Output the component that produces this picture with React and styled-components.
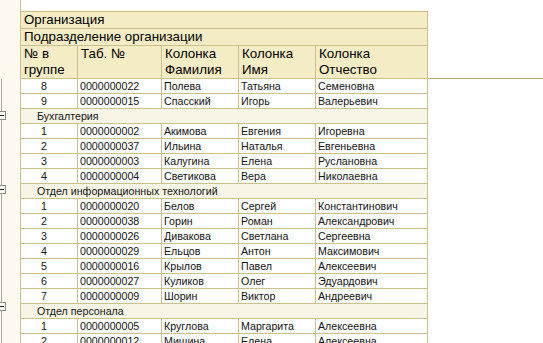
import React from 'react';
import styled, { createGlobalStyle } from 'styled-components';

const rows = [
  { n: '8', tab: '0000000022', last: 'Полева', first: 'Татьяна', middle: 'Семеновна' },
  { n: '9', tab: '0000000015', last: 'Спасский', first: 'Игорь', middle: 'Валерьевич' },
  { group: 'Бухгалтерия' },
  { n: '1', tab: '0000000002', last: 'Акимова', first: 'Евгения', middle: 'Игоревна' },
  { n: '2', tab: '0000000037', last: 'Ильина', first: 'Наталья', middle: 'Евгеньевна' },
  { n: '3', tab: '0000000003', last: 'Калугина', first: 'Елена', middle: 'Руслановна' },
  { n: '4', tab: '0000000004', last: 'Светикова', first: 'Вера', middle: 'Николаевна' },
  { group: 'Отдел информационных технологий' },
  { n: '1', tab: '0000000020', last: 'Белов', first: 'Сергей', middle: 'Константинович' },
  { n: '2', tab: '0000000038', last: 'Горин', first: 'Роман', middle: 'Александрович' },
  { n: '3', tab: '0000000026', last: 'Дивакова', first: 'Светлана', middle: 'Сергеевна' },
  { n: '4', tab: '0000000029', last: 'Ельцов', first: 'Антон', middle: 'Максимович' },
  { n: '5', tab: '0000000016', last: 'Крылов', first: 'Павел', middle: 'Алексеевич' },
  { n: '6', tab: '0000000027', last: 'Куликов', first: 'Олег', middle: 'Эдуардович' },
  { n: '7', tab: '0000000009', last: 'Шорин', first: 'Виктор', middle: 'Андреевич' },
  { group: 'Отдел персонала' },
  { n: '1', tab: '0000000005', last: 'Круглова', first: 'Маргарита', middle: 'Алексеевна' },
  { n: '2', tab: '0000000012', last: 'Мишина', first: 'Елена', middle: 'Алексеевна' },
];

const line = '#cbbf8f';

const GlobalStyle = createGlobalStyle`
  body {
    margin: 0;
    overflow: hidden;
    background: #fff;
    font-family: "Liberation Sans", Arial, sans-serif;
  }
`;

const Screen = styled.div`
  display: flex;
  width: 543px;
  height: 343px;
  overflow: hidden;
  background: #fff;
`;

const Gutter = styled.div`
  flex: none;
  width: 20px;
  padding-top: 79px;
  background: #fdf9ee;
  display: flex;
  flex-direction: column;
`;

const TreeRow = styled.div`
  height: 15px;
  margin-left: 1px;
  border-left: 1px solid #a9a9a9;
  display: flex;
  align-items: center;
`;

const MinusBox = styled.div`
  width: 9px;
  height: 9px;
  box-sizing: border-box;
  margin-left: -5px;
  border: 1px solid #8a8a8a;
  background: #fff;
  display: flex;
  align-items: center;
  justify-content: center;
  &::after {
    content: '';
    width: 5px;
    height: 1px;
    background: #222;
  }
`;

const Grid = styled.div`
  flex: none;
  width: 408px;
  box-sizing: border-box;
  border-left: 1px solid ${line};
`;

const TopBlank = styled.div`
  height: 11px;
  border-bottom: 1px solid ${line};
`;

const HeadLine = styled.div`
  height: 16px;
  line-height: 16px;
  padding-left: 3px;
  font-size: 13.33px;
  color: #000;
  background: #f4ecc5;
  border-right: 1px solid ${line};
  border-bottom: 1px solid ${line};
  white-space: nowrap;
`;

const Columns = styled.div`
  display: grid;
  grid-template-columns: 57px 84px 77px 77px 112px;
`;

const HeadCell = styled.div`
  height: 32px;
  line-height: 16px;
  padding-left: 3px;
  font-size: 13.33px;
  color: #000;
  background: #f4ecc5;
  border-right: 1px solid ${line};
  border-bottom: 1px solid ${line};
`;

const Cell = styled.div`
  height: 14px;
  line-height: 14px;
  font-size: 10.67px;
  color: #141414;
  white-space: nowrap;
  overflow: hidden;
  padding-left: ${p => (p.$center ? '0' : '2px')};
  padding-right: ${p => (p.$center ? '10px' : '0')};
  text-align: ${p => (p.$center ? 'center' : 'left')};
  border-right: 1px solid ${line};
  border-bottom: 1px solid ${line};
`;

const GroupRow = styled.div`
  grid-column: 1 / -1;
  height: 14px;
  line-height: 14px;
  font-size: 10.67px;
  color: #141414;
  padding-left: 16px;
  background: #f9f5e6;
  border-right: 1px solid ${line};
  border-bottom: 1px solid ${line};
  white-space: nowrap;
`;

const RightPane = styled.div`
  flex: 1;
`;

const RightHead = styled.div`
  height: 78px;
  border-bottom: 1px solid #b3ab88;
`;

export default function App() {
  return (
    <>
      <GlobalStyle />
      <Screen>
        <Gutter>
          {rows.map((r, i) => (
            <TreeRow key={i}>{r.group && <MinusBox />}</TreeRow>
          ))}
        </Gutter>
        <Grid>
          <TopBlank />
          <HeadLine>Организация</HeadLine>
          <HeadLine>Подразделение организации</HeadLine>
          <Columns>
            <HeadCell>№ в<br />группе</HeadCell>
            <HeadCell>Таб. №</HeadCell>
            <HeadCell>Колонка<br />Фамилия</HeadCell>
            <HeadCell>Колонка<br />Имя</HeadCell>
            <HeadCell>Колонка<br />Отчество</HeadCell>
            {rows.map((r, i) =>
              r.group ? (
                <GroupRow key={i}>{r.group}</GroupRow>
              ) : (
                <React.Fragment key={i}>
                  <Cell $center>{r.n}</Cell>
                  <Cell>{r.tab}</Cell>
                  <Cell>{r.last}</Cell>
                  <Cell>{r.first}</Cell>
                  <Cell>{r.middle}</Cell>
                </React.Fragment>
              )
            )}
          </Columns>
        </Grid>
        <RightPane>
          <RightHead />
        </RightPane>
      </Screen>
    </>
  );
}
